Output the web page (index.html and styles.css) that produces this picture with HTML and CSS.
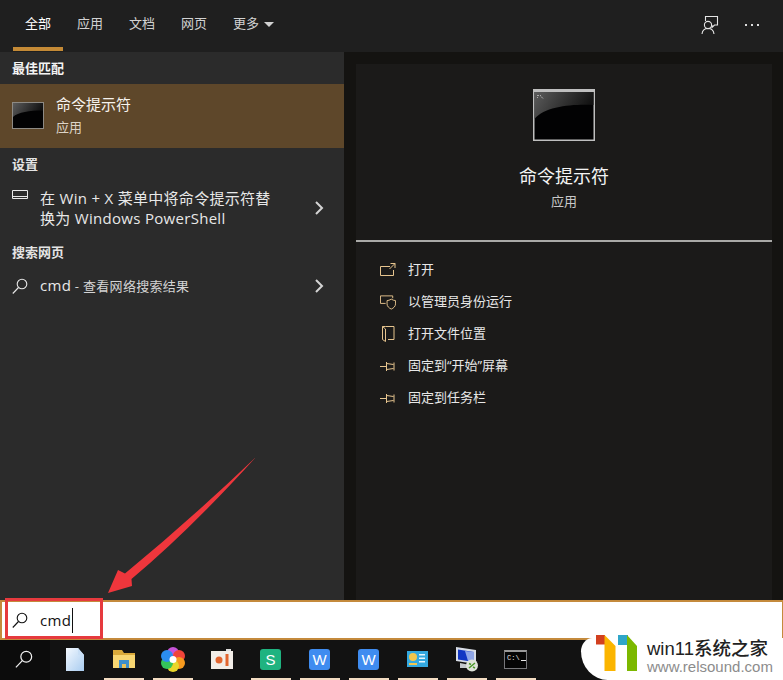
FILE: index.html
```html
<!DOCTYPE html>
<html lang="zh-CN">
<head>
<meta charset="utf-8">
<title>搜索 cmd</title>
<link rel="stylesheet" href="styles.css">
</head>
<body>
<div class="app">
  <header class="tabs">
    <nav class="tab-list">
      <span class="tab active">全部</span>
      <span class="tab">应用</span>
      <span class="tab">文档</span>
      <span class="tab">网页</span>
      <span class="tab tab-more">更多<i class="caret-down"></i></span>
    </nav>
    <div class="tab-tools">
      <svg class="tool" width="24" height="24" viewBox="0 0 24 24" fill="none" stroke="#e4e4e4" stroke-width="1.1"><path d="M5.5 8V3.5h12V12h-3l-2.5 2.500V12"/><circle cx="8" cy="12" r="3.6"/><path d="M2 21c.4-3.600 2.800-5.500 6-5.500s5.600 1.900 6 5.500"/></svg>
      <span class="dots"><i></i><i></i><i></i></span>
    </div>
  </header>

  <main class="body">
    <aside class="results">
      <h2 class="section">最佳匹配</h2>
      <div class="best">
        <svg class="cmd-small" width="32" height="27" viewBox="0 0 32 27"><use href="#cmd"/></svg>
        <div class="best-text">
          <div class="best-title">命令提示符</div>
          <div class="best-sub">应用</div>
        </div>
      </div>
      <h2 class="section">设置</h2>
      <div class="row row-tall">
        <svg class="row-icon" width="16" height="16" viewBox="0 0 16 16" fill="none" stroke="#e8e8e8"><path d="M.5 3.500h15v8H.5zM.5 9.500h15"/></svg>
        <div class="row-text">在 Win + X 菜单中将命令提示符替<br>换为 Windows PowerShell</div>
        <svg class="chev" width="10" height="14" viewBox="0 0 10 14" fill="none" stroke="#d4d4d4" stroke-width="2"><path d="M2 1l6 6-6 6"/></svg>
      </div>
      <h2 class="section">搜索网页</h2>
      <div class="row row-short">
        <svg class="row-icon" width="16" height="16" viewBox="0 0 16 16" fill="none" stroke="#e8e8e8" stroke-width="1.100"><circle cx="10" cy="6" r="4.800"/><path d="M6.500 9.500L.8 15.500"/></svg>
        <div class="row-text">cmd<span class="hint"> - 查看网络搜索结果</span></div>
        <svg class="chev" width="10" height="14" viewBox="0 0 10 14" fill="none" stroke="#d4d4d4" stroke-width="2"><path d="M2 1l6 6-6 6"/></svg>
      </div>
    </aside>

    <section class="detail">
      <div class="hero">
        <svg class="cmd-large" width="62" height="52" viewBox="0 0 62 52"><use href="#cmd-big"/></svg>
        <div class="hero-title">命令提示符</div>
        <div class="hero-sub">应用</div>
      </div>
      <ul class="actions">
        <li class="action">
          <svg width="16" height="16" viewBox="0 0 16 16" fill="none" stroke="#e6c48e"><path d="M10 4.500H.5v9h13V8M10.500 1.500h4.500V6M15 1.500L9.500 7"/></svg>
          打开
        </li>
        <li class="action">
          <svg width="16" height="16" viewBox="0 0 17 16" fill="none" stroke="#e6c48e"><path d="M6 9.500H.5v-8h13V4"/><path d="M7.500 6.500c1.500 0 2.500-.5 4.500-1.500 2 1 3 1.500 4.500 1.500v3.500c0 2.500-2 4.500-4.500 5.500-2.500-1-4.500-3-4.500-5.500z"/></svg>
          以管理员身份运行
        </li>
        <li class="action">
          <svg width="16" height="16" viewBox="0 0 16 16" fill="none" stroke="#e6c48e"><path d="M5.500.5h8.500v13H8M2.500.5v13l3 2V3zM2.500.5h3"/></svg>
          打开文件位置
        </li>
        <li class="action">
          <svg width="16" height="16" viewBox="0 0 16 16" fill="none" stroke="#e6c48e"><path d="M0 8.500h6.500M6.500 4v9M6.500 5.500l7 1M6.500 11.500l7-1M14 4.500v8"/></svg>
          固定到“开始”屏幕
        </li>
        <li class="action">
          <svg width="16" height="16" viewBox="0 0 16 16" fill="none" stroke="#e6c48e"><path d="M0 8.500h6.500M6.500 4v9M6.500 5.500l7 1M6.500 11.500l7-1M14 4.500v8"/></svg>
          固定到任务栏
        </li>
      </ul>
    </section>
  </main>

  <div class="searchbar">
    <svg class="search-icon" width="16" height="16" viewBox="0 0 16 16" fill="none" stroke="#111" stroke-width="1.100"><circle cx="10" cy="6" r="4.800"/><path d="M6.500 9.500L.8 15.500"/></svg>
    <span class="query">cmd</span><span class="cursor"></span>
  </div>

  <footer class="taskbar">
    <div class="start">
      <svg width="18" height="18" viewBox="0 0 16 16" fill="none" stroke="#f2f2f2" stroke-width="1.100"><circle cx="10" cy="6" r="4.800"/><path d="M6.500 9.500L.8 15.500"/></svg>
    </div>
    <div class="task">
      <svg width="18" height="23" viewBox="0 0 18 23"><defs><linearGradient id="doc" x1="0" y1="0" x2="1" y2="1"><stop offset="0" stop-color="#f4f9ff"/><stop offset="1" stop-color="#a9ccf0"/></linearGradient></defs><path d="M0 0h12l6 7v16H0z" fill="url(#doc)"/><path d="M12 0l6 7h-6z" fill="#c9dff6"/></svg>
    </div>
    <div class="task on">
      <svg width="22" height="18" viewBox="0 0 22 18"><path d="M0 0h9l2 3h11v15H0z" fill="#d9a93a"/><path d="M0 5h22v13H0z" fill="#f7d672"/><path d="M6 10h10v8H6z" fill="#3d8fcb"/><path d="M9 14h4v4H9z" fill="#e8c25a"/></svg>
    </div>
    <div class="task on">
      <svg width="24" height="25" viewBox="0 0 24 25"><circle cx="12" cy="6" r="6" fill="#c654d8"/><circle cx="18" cy="9" r="6" fill="#f0443a"/><circle cx="18" cy="16" r="6" fill="#f79a1e"/><circle cx="12" cy="19" r="6" fill="#e9d62a"/><circle cx="6" cy="16" r="6" fill="#35c45a"/><circle cx="6" cy="9" r="6" fill="#2b8df0"/><circle cx="12" cy="12.500" r="3.500" fill="#fff"/></svg>
    </div>
    <div class="task">
      <svg width="22" height="20" viewBox="0 0 22 20"><path d="M0 2h22v18H0z" fill="#f2ede8"/><path d="M15 0h5v2h-5z" fill="#ddd"/><circle cx="8" cy="11" r="3.500" fill="#e2652f"/><path d="M14.500 5h3v12h-3z" fill="#e2652f"/></svg>
    </div>
    <div class="task on"><span class="tile tile-s">S</span></div>
    <div class="task on"><span class="tile tile-w">W</span></div>
    <div class="task on"><span class="tile tile-w">W</span></div>
    <div class="task on">
      <svg width="21" height="16" viewBox="0 0 21 16"><path d="M0 0h21v16H0z" fill="#33a8df"/><circle cx="6" cy="6" r="4" fill="#f3c64d"/><path d="M2 12h8v2H2z" fill="#f3c64d"/><path d="M12 3h6v1.500h-6zM12 6.500h6V8h-6zM12 10h6v1.500h-6z" fill="#e8f6fd"/></svg>
    </div>
    <div class="task on">
      <svg width="24" height="25" viewBox="0 0 24 25"><path d="M1 0l20 3v14L1 14z" fill="#d8dde6"/><path d="M3 2.500l16 2.500v10L3 12.500z" fill="#1237c4"/><path d="M10 4l9 1v10l-6-1z" fill="#8fa6e8"/><path d="M5 16l10 2v3H5z" fill="#c4c8cc"/><circle cx="17" cy="18.500" r="6" fill="#dfe4da"/><path d="M14 21l6-5M14 16.500l2 1M18 20l2 1" stroke="#4c9a2a" stroke-width="1.500"/></svg>
    </div>
    <div class="task on">
      <span class="console">C:\<i class="console-line"></i></span>
    </div>
  </footer>

  <div class="highlight"></div>
  <svg class="arrow" width="160" height="146" viewBox="100 452 160 146"><path d="M256 457Q190 530 131.500 579l.5 7-24 7 10-23 7 3.500Q190 520 256 457z" fill="#ef363c"/></svg>

  <div class="mark">
    <svg class="mark-logo" width="42" height="37" viewBox="0 0 42 37"><path d="M0 0h9v9.500H0z" fill="#d2401f"/><path d="M8.500 0l11 11v25h-11z" fill="#fbb500"/><path d="M22 0h10v10H22z" fill="#2fa6c9"/><path d="M31 0l10 11v25H31z" fill="#7cb800"/></svg>
    <div class="mark-text">
      <div class="mark-name">win11系统之家</div>
      <div class="mark-url">www.relsound.com</div>
    </div>
  </div>
</div>

<svg class="defs" width="0" height="0" aria-hidden="true">
  <defs>
    <linearGradient id="gloss" x1="0" y1="0" x2="1" y2="0.300"><stop offset="0" stop-color="#5c5c5c"/><stop offset="1" stop-color="#111"/></linearGradient>
    <symbol id="cmd" viewBox="0 0 32 27" preserveAspectRatio="none">
      <path d="M0 0h32v27H0z" fill="#8d8a84"/>
      <path d="M1 1h30v25H1z" fill="#020203"/>
      <path d="M1 1h30v7.500C20 8.300 6 10 1 15z" fill="url(#gloss)"/>
    </symbol>
    <symbol id="cmd-big" viewBox="0 0 62 52">
      <path d="M0 0h62v52H0z" fill="#bfbfbf"/>
      <path d="M1.500 3h59v47.500h-59z" fill="#020203"/>
      <path d="M1.500 3h59v13C40 15 12 17 1.500 30z" fill="url(#gloss)"/>
      <path d="M4 6.500h2M7 6.500h1M4 8.500h1M8 7.500l2 2" stroke="#aaa" stroke-width="1"/>
    </symbol>
  </defs>
</svg>
</body>
</html>
```
FILE: styles.css
```css
* { box-sizing: border-box; }
html, body { margin: 0; padding: 0; background: #111; }
body { font-family: "Open Sans", "Noto Sans CJK SC", sans-serif; overflow: hidden; }
.defs { position: absolute; }

.app { position: relative; width: 783px; height: 680px; display: flex; flex-direction: column; overflow: hidden; }

.tabs { height: 52px; flex: none; display: flex; justify-content: space-between; background: #1f1f1f; padding-left: 13px; }
.tab-list { display: flex; gap: 2px; }
.tab { width: 50px; height: 51px; padding-top: 13px; font-size: 13px; line-height: 20px; color: #d2d2d2; text-align: center; white-space: nowrap; border-bottom: 4px solid transparent; }
.tab.active { color: #fff; border-bottom-color: #c48a36; }
.tab-more { padding-left: 12px; text-align: left; }
.caret-down { display: inline-block; width: 0; height: 0; margin-left: 5px; vertical-align: 1px; border-left: 5px solid transparent; border-right: 5px solid transparent; border-top: 5px solid #d2d2d2; }
.tab-tools { display: flex; align-items: center; gap: 21px; padding: 0 24px 3px 0; }
.dots { display: flex; gap: 4px; }
.dots i { width: 2px; height: 2px; background: #dcdcdc; }

.body { flex: 1; min-height: 0; display: flex; background: #141311; }
.results { width: 344px; flex: none; background: #2b2b2b; }
.section { margin: 0; height: 32px; padding-left: 12px; font-size: 13px; line-height: 32px; font-weight: 700; color: #e4e4e4; }
.results > .section:first-child { color: #f4f4f4; }

.best { height: 64px; display: flex; align-items: center; gap: 12px; padding: 0 12px; background: #5e472a; }
.best-title { font-size: 15px; line-height: 20px; color: #f6f3ee; }
.best-sub { font-size: 13px; line-height: 20px; margin-top: 3px; color: #ddd4c6; }
.best-text { margin-bottom: 1px; }
.cmd-small { flex: none; margin-bottom: 2px; }

.row { display: flex; align-items: center; padding: 0 20px 0 12px; color: #e8e8e8; }
.row-tall { height: 56px; }
.row-short { height: 36px; }
.row-icon { flex: none; margin-right: 12px; }
.row-tall .row-icon { align-self: flex-start; margin-top: 7px; }
.row-text { flex: 1; font-size: 15px; line-height: 20px; letter-spacing: .3px; }
.row-short .row-text { margin-bottom: 1px; }
.hint { font-size: 13px; color: #d4d4d4; }
.chev { flex: none; }

.detail { width: 416px; flex: none; margin: 12px 11px 0 12px; background: #1b1a19; }
.hero { height: 178px; padding-top: 25px; display: flex; flex-direction: column; align-items: center; border-bottom: 2px solid #a9a9a7; }
.cmd-large { display: block; margin-right: 1px; }
.hero-title { margin-top: 22px; font-size: 18px; line-height: 26px; color: #f4f4f4; }
.hero-sub { margin-top: 2px; font-size: 13px; line-height: 20px; color: #c8c8c8; }
.actions { list-style: none; margin: 0; padding: 12px 0 0 24px; }
.action { height: 32px; display: flex; align-items: center; gap: 12px; font-size: 13px; color: #e8e8e8; padding-bottom: 3px; }
.action svg { flex: none; margin-top: 3px; margin-bottom: 1px; }

.searchbar { height: 40px; flex: none; display: flex; align-items: center; padding-left: 10px; background: #fff; border: 2px solid #c48a3c; border-right-width: 1px; }
.search-icon { margin-right: 12px; flex: none; }
.query { font-size: 15px; line-height: 20px; letter-spacing: .3px; color: #111; }
.cursor { width: 1px; height: 25px; margin-left: 1px; background: #111; }

.taskbar { height: 40px; flex: none; display: flex; background: #121212; }
.start { width: 50px; display: flex; align-items: center; justify-content: center; background: #0c0c0c; padding: 0 2px 3px 0; }
.task { width: 49px; display: flex; align-items: center; justify-content: center; padding-bottom: 2px; position: relative; }
.task.on::after { content: ""; position: absolute; left: 4.500px; bottom: 0; width: 40px; height: 2px; background: #f3dcc2; }
.tile { width: 21px; height: 21px; border-radius: 3px; display: flex; align-items: center; justify-content: center; color: #fff; font-size: 15px; font-family: "Liberation Sans", sans-serif; }
.tile-s { background: #1fb380; }
.tile-w { background: #3f8cf0; }
.console { width: 23px; height: 19px; display: flex; align-items: flex-start; gap: 1px; padding: 2px 0 0 2px; background: #050505; border: 1px solid #77777a; border-top: 2px solid #9a9a9a; color: #e8e8e8; font-size: 7px; line-height: 8px; font-family: "Liberation Mono", monospace; }
.console-line { width: 6px; height: 1px; margin-top: 6px; background: #e8e8e8; }

.highlight { position: absolute; left: 5px; top: 598px; width: 98px; height: 41px; border: 3px solid #e63a3e; }
.arrow { position: absolute; left: 100px; top: 452px; }

.mark { position: absolute; right: 0; bottom: 0; width: 202px; height: 42px; display: flex; gap: 9px; background: #fff; border-radius: 12px 0 0 28px / 14px 0 0 30px; padding: 0 0 0 15px; }
.mark-logo { flex: none; margin-top: -3px; }
.mark-text { font-family: "Liberation Sans", "Noto Sans CJK SC", sans-serif; }
.mark-name { font-size: 18.500px; line-height: 22px; color: #222; white-space: nowrap; font-weight: 500; }
.mark-url { font-size: 15px; line-height: 14px; color: #8c8c8c; white-space: nowrap; }
```
